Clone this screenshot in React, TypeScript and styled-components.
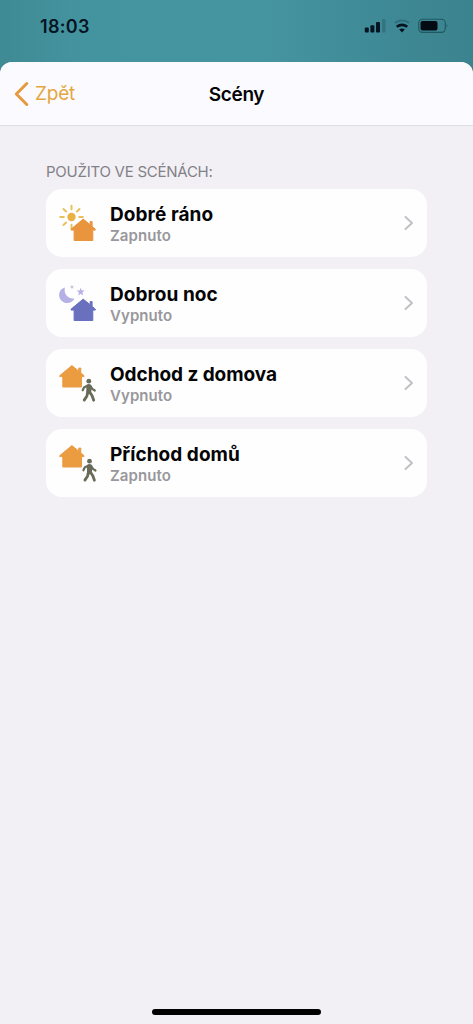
import React from "react";
import styled, { createGlobalStyle } from "styled-components";

const GlobalStyle = createGlobalStyle`
  *, *::before, *::after { box-sizing: border-box; }
  html, body { margin: 0; padding: 0; background: #f2f0f5; }
  body { font-family: Inter, "Liberation Sans", sans-serif; color: #050507; }
`;

const Screen = styled.div`
  width: 100%;
  max-width: 473px;
  height: 1024px;
  display: flex;
  flex-direction: column;
  overflow: hidden;
  background:
    linear-gradient(90deg, #3f8a94 0%, #4494a0 18%, #4595a0 55%, #3e8995 82%, #3b838f 100%) top / 100% 90px no-repeat,
    #f2f0f5;
`;

const StatusBar = styled.header`
  flex: none;
  height: 62px;
  padding: 0 25px 10px 40px;
  display: flex;
  align-items: center;
  justify-content: space-between;
  color: #051423;
`;

const Clock = styled.time`
  padding-top: 1px;
  font-size: 18px;
  font-weight: 600;
  line-height: 23px;
  letter-spacing: 0.3px;
`;

const Sheet = styled.main`
  flex: 1;
  display: flex;
  flex-direction: column;
  border-radius: 12px 12px 0 0;
  overflow: hidden;
  background: #f2f0f5;
`;

const NavBar = styled.nav`
  flex: none;
  height: 64px;
  display: grid;
  grid-template-columns: 1fr auto 1fr;
  align-items: center;
  padding: 0 14px;
  background: #fbfaff;
  border-bottom: 1px solid #e0dfe4;
`;

const BackButton = styled.button`
  display: flex;
  align-items: center;
  gap: 6px;
  padding: 0;
  border: 0;
  background: none;
  font: 400 19px/24px Inter, "Liberation Sans", sans-serif;
  letter-spacing: -0.2px;
  color: #e3a73f;
`;

const BackLabel = styled.span`
  padding-top: 1px;
`;

const Title = styled.h1`
  margin: 0;
  padding-top: 2px;
  font-size: 19px;
  line-height: 24px;
  font-weight: 600;
  letter-spacing: -0.35px;
`;

const Content = styled.section`
  display: flex;
  flex-direction: column;
  padding: 36px 46px 0;
`;

const SectionTitle = styled.h2`
  margin: 0 0 7px;
  font-size: 15px;
  line-height: 20px;
  font-weight: 400;
  letter-spacing: -0.25px;
  color: #828187;
`;

const SceneList = styled.ul`
  margin: 0;
  padding: 0;
  list-style: none;
  display: flex;
  flex-direction: column;
  gap: 12px;
`;

const SceneCard = styled.li`
  height: 68px;
  display: flex;
  align-items: center;
  padding: 0 13px 0 8px;
  border-radius: 16px;
  background: #fefefe;
`;

const SceneText = styled.div`
  flex: 1;
  padding: 1px 0 0 8px;
`;

const SceneName = styled.div<{ $tracking: number }>`
  font-size: 19px;
  line-height: 23px;
  font-weight: 650;
  letter-spacing: ${(p) => p.$tracking}px;
`;

const SceneState = styled.div`
  font-size: 15px;
  line-height: 19px;
  font-weight: 600;
  letter-spacing: 0.08px;
  color: #98979c;
`;

const HomeArea = styled.footer`
  margin-top: auto;
  padding-bottom: 9px;
  display: flex;
  justify-content: center;
`;

const HomeIndicator = styled.div`
  width: 169px;
  height: 6px;
  border-radius: 3px;
  background: #020203;
`;

type SceneKind = "morning" | "night" | "leave" | "arrive";

const House = ({ x, y, color }: { x: number; y: number; color: string }) => (
  <path
    transform={`translate(${x} ${y})`}
    fill={color}
    stroke={color}
    strokeWidth="1"
    strokeLinejoin="round"
    d="M12.7.6 19.6 6.2V3.1h2v4.8l3.2 2.7v1H22.3V22H3.6V11.6H.6v-1Z"
  />
);

const Sun = () => (
  <g>
    <circle cx="25.5" cy="28" r="4.2" fill="#e9b243" />
    {[0, 45, 90, 180, 225, 270, 315].map((angle) => (
      <path
        key={angle}
        d="M25.5 20.3v-3.6"
        transform={`rotate(${angle} 25.5 28)`}
        stroke="#e9c15c"
        strokeWidth="2"
        strokeLinecap="round"
      />
    ))}
  </g>
);

const Moon = () => (
  <g fill="#b5b1e6">
    <path d="M19 18.4A8 8 0 1 0 28.4 29.4C22.6 30.6 17.2 25.4 19 18.4Z" />
    <path d="m34.7 18.7 1.1 2.7 2.9.2-2.3 1.9.8 2.9-2.5-1.6-2.5 1.6.8-2.9-2.3-1.9 2.9-.2Z" />
    <path fill="#c6c2d5" d="m26 15.8.6 1.4 1.5.1-1.2 1 .4 1.5-1.3-.8-1.3.8.4-1.5-1.2-1 1.5-.1Z" />
  </g>
);

const Walker = ({ shift = 0 }: { shift?: number }) => (
  <g transform={`translate(${shift} 0)`} fill="none" stroke="#686b57" strokeLinecap="round" strokeLinejoin="round">
    <circle cx="42.8" cy="32.2" r="2.4" fill="#686b57" stroke="none" />
    <path d="M42.8 37.6v5.2" strokeWidth="5" />
    <path d="m41.4 36.6-3.4 1.9-1.3 2.8M44.4 36.8l1.8 3.1 2.6 1.6" strokeWidth="2.2" />
    <path d="m41.8 43.2-1 4-2.6 3.9M43.8 43.2l2.3 3.5 1.6 4.5" strokeWidth="2.8" />
  </g>
);

const SceneIcon = ({ kind }: { kind: SceneKind }) => (
  <svg width="48" height="68" viewBox="8 0 48 68" aria-hidden="true">
    {kind === "morning" && <><Sun /><House x={24.5} y={29.5} color="#e8953e" /></>}
    {kind === "night" && <><Moon /><House x={24.5} y={29.5} color="#6970be" /></>}
    {kind === "leave" && <><House x={13.2} y={16} color="#eb9b40" /><Walker /></>}
    {kind === "arrive" && <><House x={13.2} y={16} color="#eb9b40" /><Walker shift={0.7} /></>}
  </svg>
);

const scenes: { name: string; state: string; kind: SceneKind; tracking: number }[] = [
  { name: "Dobré ráno", state: "Zapnuto", kind: "morning", tracking: 0.08 },
  { name: "Dobrou noc", state: "Vypnuto", kind: "night", tracking: 0.05 },
  { name: "Odchod z domova", state: "Vypnuto", kind: "leave", tracking: -0.05 },
  { name: "Příchod domů", state: "Zapnuto", kind: "arrive", tracking: 0.05 },
];

const StatusIcons = () => (
  <svg width="84" height="18" viewBox="364 17 84 18" aria-hidden="true">
    <g fill="#051423">
      <rect x="364.8" y="27.4" width="4" height="5" rx="1" />
      <rect x="370.4" y="25.2" width="4" height="7.2" rx="1" />
      <rect x="376" y="22" width="4" height="10.4" rx="1" />
      <rect x="382" y="19.3" width="3.6" height="13.1" rx="1" opacity=".18" />
    </g>
    <g fill="none" stroke="#051423">
      <path d="M394.8 22.9q7.2-4.6 14.4 0" strokeWidth="2" opacity=".22" />
      <path d="M396.7 26.7q5.3-3.8 10.6 0" strokeWidth="2.6" />
    </g>
    <path d="m399.2 29.5 2.8 3 2.8-3q-2.8-1.9-5.6 0Z" fill="#051423" />
    <rect x="418.7" y="19.2" width="26.6" height="13.2" rx="3.8" fill="none" stroke="#1f5963" strokeWidth="1.1" />
    <rect x="420.5" y="21" width="17" height="9.6" rx="2" fill="#020b14" />
    <path d="M446.6 23.8q1.6 2 0 4Z" fill="#1f5963" />
  </svg>
);

export default function App() {
  return (
    <>
      <GlobalStyle />
      <Screen>
        <StatusBar>
          <Clock>18:03</Clock>
          <StatusIcons />
        </StatusBar>
        <Sheet>
          <NavBar>
            <BackButton type="button">
              <svg width="15" height="26" viewBox="0 0 15 26" aria-hidden="true">
                <path d="M12.8 2.5 2.3 13l10.5 10.5" fill="none" stroke="#e69a40" strokeWidth="3" strokeLinecap="round" strokeLinejoin="round" />
              </svg>
              <BackLabel>Zpět</BackLabel>
            </BackButton>
            <Title>Scény</Title>
          </NavBar>
          <Content>
            <SectionTitle>POUŽITO VE SCÉNÁCH:</SectionTitle>
            <SceneList>
              {scenes.map((scene) => (
                <SceneCard key={scene.name}>
                  <SceneIcon kind={scene.kind} />
                  <SceneText>
                    <SceneName $tracking={scene.tracking}>{scene.name}</SceneName>
                    <SceneState>{scene.state}</SceneState>
                  </SceneText>
                  <svg width="10" height="16" viewBox="0 0 10 16" aria-hidden="true">
                    <path d="m1.5 2 6.5 6-6.5 6" fill="none" stroke="#c2c1c6" strokeWidth="2" strokeLinecap="round" strokeLinejoin="round" />
                  </svg>
                </SceneCard>
              ))}
            </SceneList>
          </Content>
          <HomeArea>
            <HomeIndicator />
          </HomeArea>
        </Sheet>
      </Screen>
    </>
  );
}
